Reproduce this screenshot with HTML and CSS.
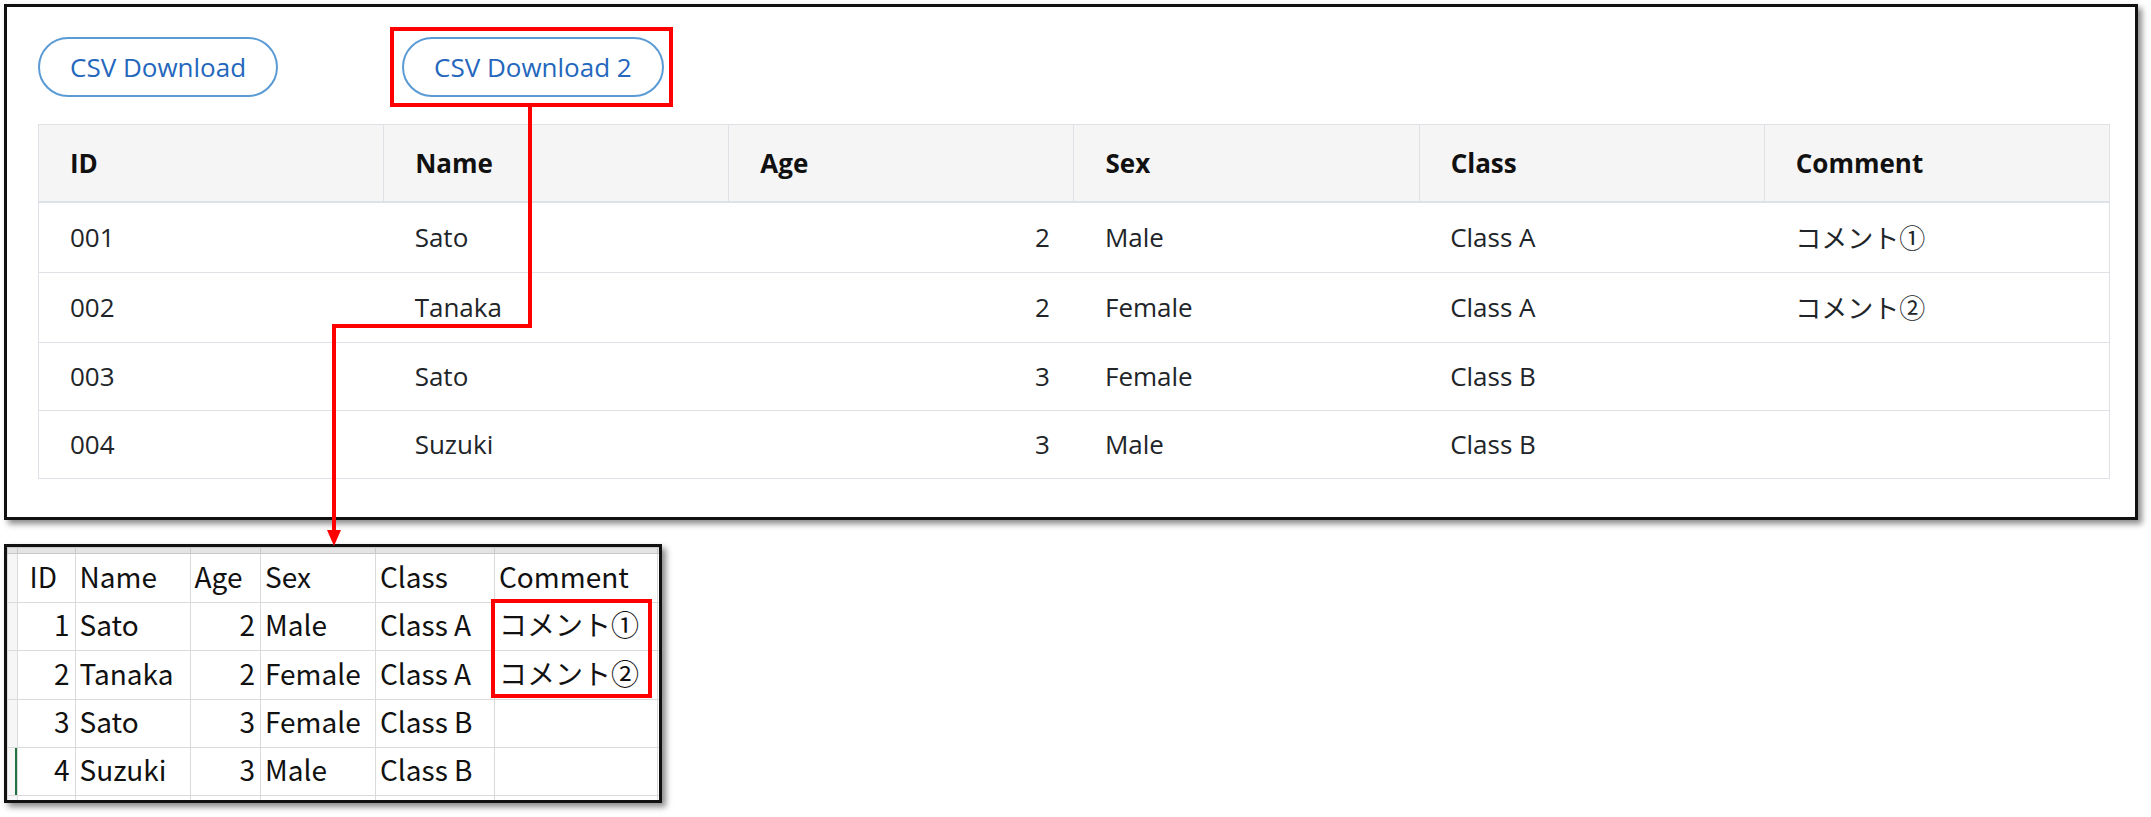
FILE: index.html
```html
<!DOCTYPE html>
<html lang="ja">
<head>
<meta charset="utf-8">
<title>CSV Download</title>
<link rel="stylesheet" href="styles.css">
</head>
<body>
<div class="page">
  <section class="panel">
    <div class="actions">
      <button class="btn">CSV Download</button>
      <div class="highlight"><button class="btn">CSV Download 2</button></div>
    </div>
    <table class="data">
      <thead>
        <tr><th>ID</th><th>Name</th><th>Age</th><th>Sex</th><th>Class</th><th>Comment</th></tr>
      </thead>
      <tbody>
        <tr><td>001</td><td>Sato</td><td class="num">2</td><td>Male</td><td>Class A</td><td>コメント①</td></tr>
        <tr><td>002</td><td>Tanaka</td><td class="num">2</td><td>Female</td><td>Class A</td><td>コメント②</td></tr>
        <tr><td>003</td><td>Sato</td><td class="num">3</td><td>Female</td><td>Class B</td><td></td></tr>
        <tr><td>004</td><td>Suzuki</td><td class="num">3</td><td>Male</td><td>Class B</td><td></td></tr>
      </tbody>
    </table>
  </section>

  <section class="sheet">
    <table class="grid">
      <colgroup>
        <col class="c-rh"><col class="c-a"><col class="c-b"><col class="c-c"><col class="c-d"><col class="c-e"><col class="c-f"><col class="c-g">
      </colgroup>
      <tr class="strip"><td></td><td></td><td></td><td></td><td></td><td></td><td></td><td></td></tr>
      <tr class="hdr"><td class="rh"></td><td class="id-h">ID</td><td>Name</td><td>Age</td><td>Sex</td><td>Class</td><td>Comment</td><td></td></tr>
      <tr class="r48"><td class="rh"></td><td class="n">1</td><td>Sato</td><td class="n">2</td><td>Male</td><td>Class A</td><td>コメント①</td><td></td></tr>
      <tr class="r49"><td class="rh"></td><td class="n">2</td><td>Tanaka</td><td class="n">2</td><td>Female</td><td>Class A</td><td>コメント②</td><td></td></tr>
      <tr class="r48"><td class="rh"></td><td class="n">3</td><td>Sato</td><td class="n">3</td><td>Female</td><td>Class B</td><td></td><td></td></tr>
      <tr class="r48"><td class="rh sel"></td><td class="n">4</td><td>Suzuki</td><td class="n">3</td><td>Male</td><td>Class B</td><td></td><td></td></tr>
      <tr class="r48"><td class="rh"></td><td></td><td></td><td></td><td></td><td></td><td></td><td></td></tr>
    </table>
    <div class="mark"></div>
  </section>

  <svg class="connector" width="2151" height="817" viewBox="0 0 2151 817" aria-hidden="true">
    <path d="M530 107 V326 H334 V532" fill="none" stroke="#ff0000" stroke-width="4"/>
    <polygon points="327,530 341,530 334,546" fill="#ff0000"/>
  </svg>
</div>
</body>
</html>
```

FILE: styles.css
```css
* { box-sizing: border-box; }

body {
  margin: 0;
  background: #fff;
  font-family: "Open Sans", "Noto Sans CJK JP", sans-serif;
}

.page {
  position: relative;
  width: 2151px;
  height: 817px;
  padding: 4px 0 0 4px;
  overflow: hidden;
}

/* Web app panel */
.panel {
  width: 2134px;
  border: 3px solid #111;
  box-shadow: 4px 4px 6px rgba(0, 0, 0, 0.45);
  padding: 20px 25px 38px 31px;
  background: #fff;
}

.actions {
  display: flex;
  align-items: center;
  gap: 112px;
  margin-bottom: 17px;
}

.btn {
  display: flex;
  align-items: center;
  height: 60px;
  padding: 0 30px;
  border: 2px solid #5b9bd5;
  border-radius: 30px;
  background: #fff;
  color: #2467bd;
  font-family: "Open Sans", sans-serif;
  font-size: 26px;
  cursor: pointer;
}

.highlight {
  border: 4px solid #ff0000;
  padding: 6px 5px 6px 8px;
}

.data {
  width: 100%;
  table-layout: fixed;
  border-collapse: collapse;
  font-size: 26px;
  color: #212529;
}

.data th {
  background: #f5f5f5;
  text-align: left;
  font-weight: 700;
  color: #111;
  padding: 20px 24px 20px 31px;
  border: 1px solid #dee2e6;
  border-bottom: 2px solid #dee2e6;
}

.data td {
  padding: 15px 24px 16px 31px;
  border-top: 1px solid #dee2e6;
  border-bottom: 1px solid #dee2e6;
}

.data td:first-child { border-left: 1px solid #dee2e6; }
.data td:last-child { border-right: 1px solid #dee2e6; }

.data .num { text-align: right; }

/* Excel snippet */
.sheet {
  position: relative;
  margin-top: 24px;
  width: 658px;
  height: 259px;
  border: 3px solid #111;
  box-shadow: 4px 4px 6px rgba(0, 0, 0, 0.45);
  overflow: hidden;
  background: #fff;
}

.grid {
  width: 670px;
  table-layout: fixed;
  border-collapse: collapse;
  font-family: "Noto Sans CJK JP", sans-serif;
  font-size: 28px;
  color: #111;
}

.c-rh { width: 9.5px; }
.c-a { width: 58px; }
.c-b { width: 115px; }
.c-c { width: 70.5px; }
.c-d { width: 115px; }
.c-e { width: 119px; }
.c-f { width: 163px; }
.c-g { width: 20px; }

.grid td {
  border: 1px solid #dadada;
  padding: 0 5px 12px 4px;
  line-height: 1;
  vertical-align: bottom;
  white-space: nowrap;
  overflow: hidden;
}

.grid .strip td {
  height: 6px;
  padding: 0;
  background: #e4e4e4;
  border-color: #c8c8c8;
}

.grid .hdr td { height: 49px; }
.grid .r48 td { height: 48px; }
.grid .r49 td { height: 49px; }

.grid td.rh {
  padding: 0;
  background: #f6f6f6;
}

.grid td.sel {
  box-shadow: inset -2px 0 0 #217346;
}

.grid td.n {
  text-align: right;
  padding-right: 5px;
}

.grid td.id-h { padding-left: 12px; }

.mark {
  position: absolute;
  left: 484px;
  top: 52px;
  width: 161px;
  height: 99px;
  border: 4px solid #ff0000;
}

.connector {
  position: absolute;
  left: 0;
  top: 0;
  pointer-events: none;
}
```
